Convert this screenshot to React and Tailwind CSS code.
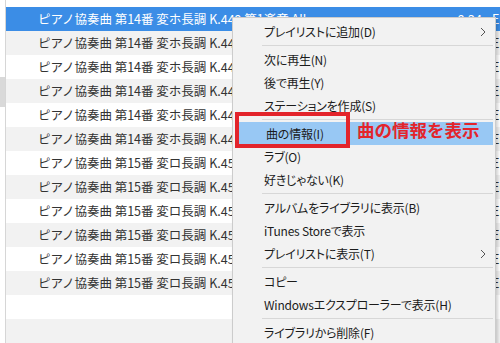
const rows = [
  { t: "ピアノ協奏曲 第14番 変ホ長調 K.449 第1楽章 Allegro ...", time: "9:24", sel: true },
  { t: "ピアノ協奏曲 第14番 変ホ長調 K.449 第2楽章 Andantino", time: "6:10" },
  { t: "ピアノ協奏曲 第14番 変ホ長調 K.449 第3楽章 Allegro ma non troppo", time: "5:35" },
  { t: "ピアノ協奏曲 第14番 変ホ長調 K.449 第1楽章 Allegro vivace", time: "9:02" },
  { t: "ピアノ協奏曲 第14番 変ホ長調 K.449 第2楽章 Andantino", time: "6:21" },
  { t: "ピアノ協奏曲 第14番 変ホ長調 K.449 第3楽章 Allegro ma non troppo", time: "5:40" },
  { t: "ピアノ協奏曲 第15番 変ロ長調 K.450 第1楽章 Allegro", time: "10:11" },
  { t: "ピアノ協奏曲 第15番 変ロ長調 K.450 第2楽章 Andante", time: "6:05" },
  { t: "ピアノ協奏曲 第15番 変ロ長調 K.450 第3楽章 Allegro", time: "6:30" },
  { t: "ピアノ協奏曲 第15番 変ロ長調 K.450 第1楽章 Allegro", time: "10:02" },
  { t: "ピアノ協奏曲 第15番 変ロ長調 K.450 第2楽章 Andante", time: "6:12" },
  { t: "ピアノ協奏曲 第15番 変ロ長調 K.450 第3楽章 Allegro", time: "6:28" },
  { t: "", time: "" },
  { t: "", time: "" },
];

const menu = [
  { l: "プレイリストに追加(D)", sub: true },
  "sep",
  { l: "次に再生(N)" },
  { l: "後で再生(Y)" },
  { l: "ステーションを作成(S)" },
  "sep",
  { l: "曲の情報(I)", hi: true },
  { l: "ラブ(O)" },
  { l: "好きじゃない(K)" },
  "sep",
  { l: "アルバムをライブラリに表示(B)" },
  { l: "iTunes Storeで表示" },
  { l: "プレイリストに表示(T)", sub: true },
  "sep",
  { l: "コピー" },
  { l: "Windowsエクスプローラーで表示(H)" },
  "sep",
  { l: "ライブラリから削除(F)" },
];

function Chevron() {
  return (
    <svg width="6" height="10" viewBox="0 0 6 10" className="absolute right-[9px] top-[7px]">
      <path d="M1 1 L5 5 L1 9" fill="none" stroke="#555" strokeWidth="1" />
    </svg>
  );
}

export default function App() {
  return (
    <div className="relative w-[500px] h-[343px] overflow-hidden bg-white font-['Noto_Sans_CJK_JP','Noto_Sans',sans-serif]">
      <div className="flex h-full">
        <div className="w-[6px] shrink-0 border-r border-[#d6d6d6] flex flex-col">
          <div className="h-[77px]" />
          <div className="h-[30px] bg-[#d9d9d9]" />
        </div>
        <div className="flex-1 flex flex-col min-w-0">
          <div className="h-[7px] shrink-0" />
          {rows.map((r, i) => (
            <div
              key={i}
              className={
                "flex items-center h-[24px] shrink-0 pl-[32px] whitespace-nowrap text-[12.5px] " +
                (r.sel
                  ? "bg-[#3b8de6] text-white"
                  : i % 2 === 1
                  ? "bg-[#f2f2f2] text-[#333333]"
                  : "bg-white text-[#333333]")
              }
            >
              <div className="w-[412px] shrink-0 overflow-hidden">{r.t}</div>
              <div className="w-[32px] shrink-0 text-right">{r.time}</div>
              <div className="ml-[10px] shrink-0">{r.t ? "Emil Gilels" : ""}</div>
            </div>
          ))}
        </div>
      </div>

      <div className="absolute left-[232px] top-[17px] w-[264px] bg-[#f2f2f2] border border-[#cccccc] shadow-[2px_2px_3px_rgba(0,0,0,0.18)] py-[2px] text-[12px] text-[#1b1b1b] [font-feature-settings:'palt'] tracking-[-0.2px]">
        {menu.map((m, i) =>
          m === "sep" ? (
            <div key={i} className="h-[5px] flex items-center pl-[29px] pr-[2px]">
              <div className="h-px w-full bg-[#d7d7d7]" />
            </div>
          ) : (
            <div
              key={i}
              className={
                "relative h-[23px] flex items-center pl-[31px] whitespace-nowrap " +
                (m.hi ? "bg-[#98c8f4] mx-[2px] pl-[29px]" : "")
              }
            >
              {m.l}
              {m.sub && <Chevron />}
            </div>
          )
        )}
      </div>

      <div className="absolute left-[235px] top-[112px] w-[115px] h-[36px] border-[4px] border-[#e3242b]" />
      <div className="absolute left-[357px] top-[118px] text-[17.5px] leading-[24px] font-bold text-[#e3242b] whitespace-nowrap">
        曲の情報を表示
      </div>
    </div>
  );
}
